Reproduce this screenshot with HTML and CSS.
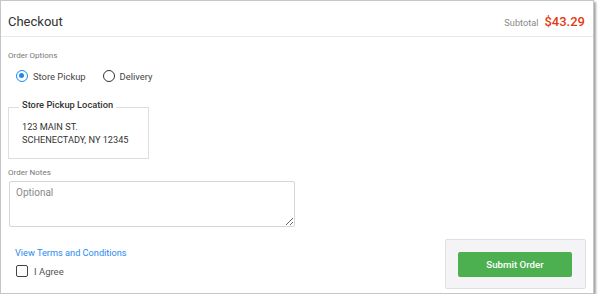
FILE: index.html
```html
<!DOCTYPE html>
<html>
<head>
<meta charset="utf-8">
<link rel="stylesheet" href="styles.css">
</head>
<body>
<div class="card">
  <div class="header">
    <div class="title">Checkout</div>
    <div class="subtotal"><span class="sub-label">Subtotal</span><span class="amount">$43.29</span></div>
  </div>
  <div class="main">
    <div class="label options-label">Order Options</div>
    <div class="radios">
      <label class="radio"><span class="radio-dot checked"></span>Store Pickup</label>
      <label class="radio"><span class="radio-dot"></span>Delivery</label>
    </div>
    <fieldset class="location">
      <legend>Store Pickup Location</legend>
      <div class="addr">123 MAIN ST.</div>
      <div class="addr">SCHENECTADY, NY 12345</div>
    </fieldset>
    <div class="label notes-label">Order Notes</div>
    <textarea class="notes" placeholder="Optional"></textarea>
    <div class="bottom">
      <div class="terms">
        <a class="link" href="#">View Terms and Conditions</a>
        <label class="agree"><span class="box"></span>I Agree</label>
      </div>
      <div class="submit-panel">
        <button class="submit">Submit Order</button>
      </div>
    </div>
  </div>
</div>
</body>
</html>
```
FILE: styles.css
```css
* { box-sizing: border-box; }
body {
  margin: 0;
  background: #fff;
  font-family: Roboto, "Liberation Sans", Arial, sans-serif;
  color: #333;
}
.card {
  width: 594px;
  height: 294px;
  border: 1px solid #c6c6c6;
  box-shadow: 2px 2px 2px rgba(0,0,0,0.35);
  background: #fff;
  display: flex;
  flex-direction: column;
}
.header {
  height: 36px;
  border-bottom: 1px solid #e8e8e8;
  display: flex;
  align-items: center;
  justify-content: space-between;
  padding: 5px 8px 0 7px;
}
.title {
  font-size: 13px;
  color: #333;
}
.subtotal {
  display: flex;
  align-items: baseline;
}
.sub-label {
  font-size: 9.2px;
  color: #888;
  margin-right: 6px;
}
.amount {
  font-size: 13px;
  font-weight: 500;
  color: #e53a14;
}
.main {
  padding: 0 7px 0 7px;
  display: flex;
  flex-direction: column;
  align-items: flex-start;
}
.label {
  font-size: 8px;
  line-height: 12px;
  color: #777;
}
.options-label { margin-top: 13px; }
.radios {
  display: flex;
  margin-top: 7px;
  padding-left: 8px;
  height: 14px;
  align-items: center;
}
.radio {
  display: flex;
  align-items: center;
  font-size: 9.4px;
  color: #444;
  margin-right: 17px;
}
.radio-dot {
  width: 12px;
  height: 12px;
  border-radius: 50%;
  border: 1.5px solid #333;
  margin-right: 5px;
  position: relative;
  display: inline-block;
}
.radio-dot.checked {
  border-color: #1e88f0;
}
.radio-dot.checked::after {
  content: "";
  position: absolute;
  left: 2px;
  top: 2px;
  width: 5px;
  height: 5px;
  border-radius: 50%;
  background: #1e88f0;
}
.location {
  margin: 16px 0 0 0;
  width: 141px;
  border: 1px solid #dedede;
  padding: 4px 10px 12px 13px;
  min-width: 0;
}
.location legend {
  font-size: 9.3px;
  line-height: 11px;
  font-weight: 500;
  color: #333;
  padding: 0 3px 6px 3px;
  margin-left: -3px;
}
.addr {
  font-size: 9.2px;
  line-height: 13px;
  color: #333;
}
.notes-label { margin-top: 8px; }
.notes {
  margin-top: 2px;
  margin-left: 1px;
  width: 286px;
  height: 46px;
  border: 1px solid #d6d6d6;
  border-radius: 2px;
  padding: 5px 6px;
  font-family: Roboto, "Liberation Sans", Arial, sans-serif;
  font-size: 10px;
  resize: vertical;
}
.notes::placeholder { color: #888; }
.bottom {
  display: flex;
  justify-content: space-between;
  align-items: flex-start;
  width: 100%;
  margin-top: 12px;
}
.terms {
  padding-left: 7px;
  padding-top: 8px;
  display: flex;
  flex-direction: column;
  align-items: flex-start;
}
.link {
  font-size: 9.2px;
  line-height: 12px;
  color: #2a8af0;
  text-decoration: none;
}
.agree {
  display: flex;
  align-items: center;
  margin-top: 6px;
  font-size: 9.5px;
  color: #555;
}
.box {
  width: 12px;
  height: 12px;
  border: 1.5px solid #444;
  border-radius: 2px;
  margin: 0 6px 0 1px;
}
.submit-panel {
  width: 141px;
  height: 50px;
  background: #f4f4f6;
  border: 1px solid #e0e0e0;
  border-radius: 2px;
  padding: 12px 13px 0 12px;
}
.submit {
  width: 114px;
  height: 25px;
  border: none;
  border-radius: 2px;
  background: #4caf50;
  color: #fff;
  font-family: Roboto, "Liberation Sans", Arial, sans-serif;
  font-size: 9.7px;
  font-weight: 500;
}
```
